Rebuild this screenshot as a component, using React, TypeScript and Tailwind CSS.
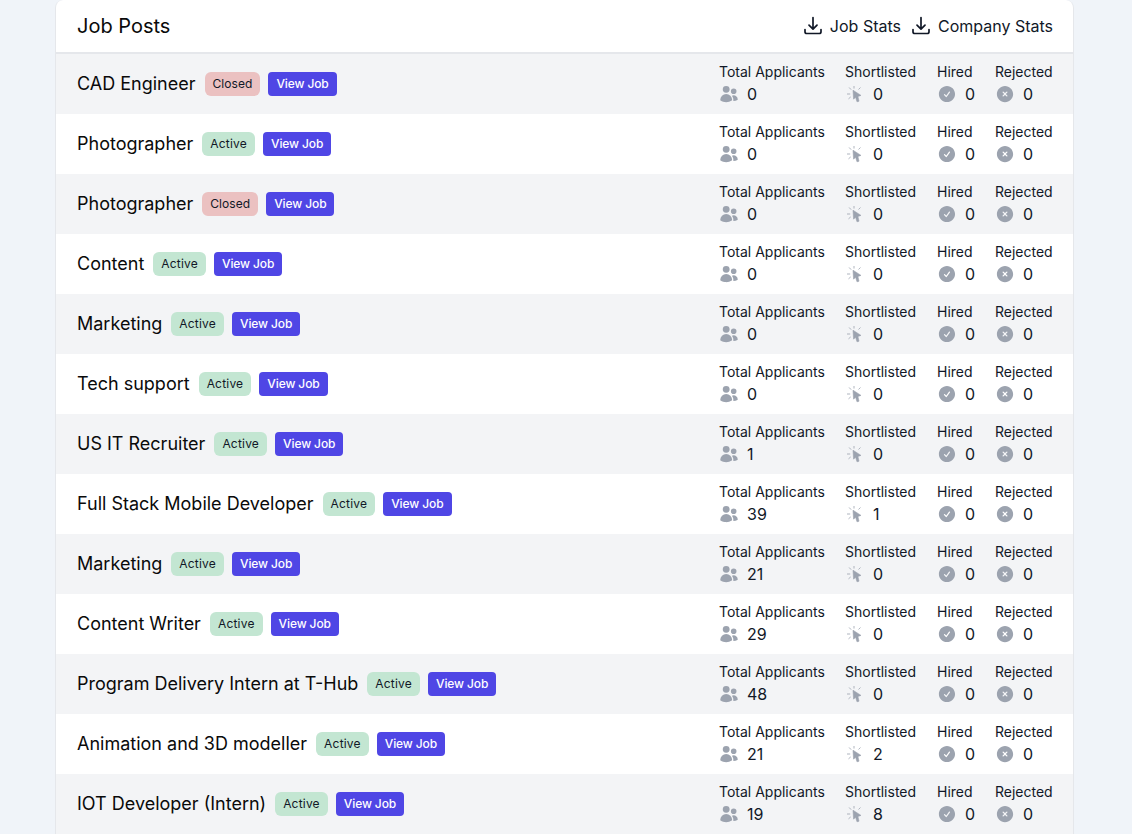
import React from 'react';
import { HiUsers, HiCheckCircle, HiXCircle } from 'react-icons/hi2';

type Job = {
  title: string;
  status: 'Active' | 'Closed';
  total: number;
  shortlisted: number;
};

const jobs: Job[] = [
  { title: 'CAD Engineer', status: 'Closed', total: 0, shortlisted: 0 },
  { title: 'Photographer', status: 'Active', total: 0, shortlisted: 0 },
  { title: 'Photographer', status: 'Closed', total: 0, shortlisted: 0 },
  { title: 'Content', status: 'Active', total: 0, shortlisted: 0 },
  { title: 'Marketing', status: 'Active', total: 0, shortlisted: 0 },
  { title: 'Tech support', status: 'Active', total: 0, shortlisted: 0 },
  { title: 'US IT Recruiter', status: 'Active', total: 1, shortlisted: 0 },
  { title: 'Full Stack Mobile Developer', status: 'Active', total: 39, shortlisted: 1 },
  { title: 'Marketing', status: 'Active', total: 21, shortlisted: 0 },
  { title: 'Content Writer', status: 'Active', total: 29, shortlisted: 0 },
  { title: 'Program Delivery Intern at T-Hub', status: 'Active', total: 48, shortlisted: 0 },
  { title: 'Animation and 3D modeller', status: 'Active', total: 21, shortlisted: 2 },
  { title: 'IOT Developer (Intern)', status: 'Active', total: 19, shortlisted: 8 },
];

function DownloadIcon() {
  return (
    <svg viewBox="0 0 24 24" fill="none" stroke="#111827" strokeWidth="1.7" strokeLinecap="round" strokeLinejoin="round" className="h-6 w-6">
      <path d="M13 3.5V15M9 11.2l4 4 4-4" />
      <path d="M5 15.5v2.2c0 1 .8 1.8 1.8 1.8h12.4c1 0 1.8-.8 1.8-1.8v-2.2" />
    </svg>
  );
}

function ClickIcon() {
  return (
    <svg viewBox="0 0 20 20" fill="none" className="h-5 w-5 text-[#9ca3af]">
      <path d="M8 6.2L16 11.4L12.9 12.4L14 17.2L12 17.8L10.6 13.2L8.6 15.2Z" fill="currentColor" stroke="currentColor" strokeWidth="0.6" strokeLinejoin="round" />
      <path
        d="M9 2.4V4.2M2.4 10H4.8M4.4 3.8L5.9 5.4M15.2 3.8L13.8 5.2M3.8 14.6L5.4 13.2"
        stroke="currentColor"
        strokeWidth="1"
        strokeLinecap="round"
        opacity="0.8"
      />
    </svg>
  );
}

function Stat({
  label,
  value,
  icon,
  width,
}: {
  label: string;
  value: number;
  icon: React.ReactNode;
  width: string;
}) {
  return (
    <div className={`flex flex-col gap-0.5 ${width}`}>
      <span className="whitespace-nowrap text-sm leading-5 text-[#111827]">{label}</span>
      <div className="flex items-center gap-2 text-base leading-5 text-[#111827]">
        {icon}
        <span>{value}</span>
      </div>
    </div>
  );
}

function JobRow({ job, index }: { job: Job; index: number }) {
  return (
    <div className={`flex h-[60px] items-center justify-between pl-[21px] pr-5 ${index % 2 === 0 ? 'bg-[#f3f4f6]' : 'bg-white'}`}>
      <div className="flex items-center gap-2">
        <span className="mr-px text-lg text-[#0a0a0a]">{job.title}</span>
        <span
          className={`rounded-md px-2 py-1 text-xs text-[#111827] ${
            job.status === 'Active' ? 'bg-[#c3e6d2] tracking-[0.2px]' : 'bg-[#ebc1c1] tracking-[0.05px]'
          }`}
        >
          {job.status}
        </span>
        <a className="rounded bg-[#4f46e5] px-2 py-1 text-xs font-medium tracking-[-0.1px] text-white">View Job</a>
      </div>
      <div className="flex gap-5 pb-0.5">
        <Stat label="Total Applicants" value={job.total} width="w-[106px]" icon={<HiUsers className="h-5 w-5 text-[#9ca3af]" />} />
        <Stat label="Shortlisted" value={job.shortlisted} width="w-[72px]" icon={<ClickIcon />} />
        <Stat label="Hired" value={0} width="w-[38px]" icon={<HiCheckCircle className="h-5 w-5 text-[#9ca3af]" />} />
        <Stat label="Rejected" value={0} width="w-[58px]" icon={<HiXCircle className="h-5 w-5 text-[#9ca3af]" />} />
      </div>
    </div>
  );
}

export default function App() {
  return (
    <div className="h-screen overflow-hidden bg-[#f0f4f9] font-['Inter',sans-serif]">
      <div className="ml-[55px] w-[1019px] overflow-hidden rounded-t-lg border-x border-[#e5e7eb] bg-white">
        <div className="flex h-[54px] items-center justify-between border-b-2 border-[#e5e7eb] pl-[21px] pr-5">
          <h1 className="text-xl font-normal text-[#0a0a0a]">Job Posts</h1>
          <div className="flex items-center gap-[7px] text-base text-[#111827]">
            <button className="flex items-center gap-1.5">
              <DownloadIcon />
              Job Stats
            </button>
            <button className="flex items-center gap-1.5">
              <DownloadIcon />
              Company Stats
            </button>
          </div>
        </div>
        {jobs.map((job, i) => (
          <JobRow key={i} job={job} index={i} />
        ))}
      </div>
    </div>
  );
}
